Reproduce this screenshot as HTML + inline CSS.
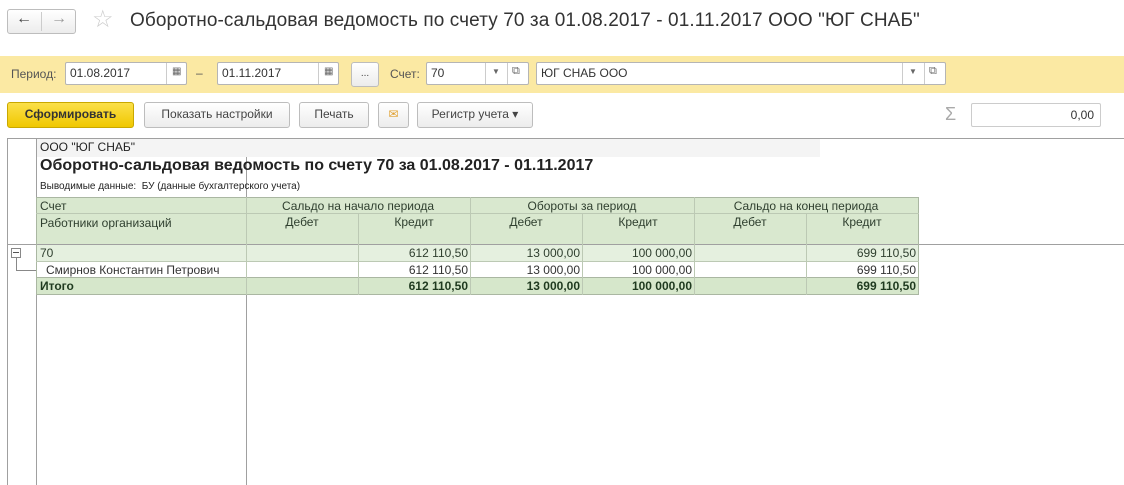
<!DOCTYPE html>
<html><head><meta charset="utf-8"><style>
*{box-sizing:border-box;margin:0;padding:0}
body{width:1124px;height:485px;background:#fff;font-family:"Liberation Sans",Arial,sans-serif;position:relative;overflow:hidden;color:#333}
.a{position:absolute}
.btn{position:absolute;border:1px solid #bdbdbd;border-radius:3px;background:linear-gradient(#fff,#ececec);font-size:12px;color:#444;text-align:center;line-height:22px;height:24px}
.inp{position:absolute;background:#fff;border:1px solid #b5b5b5;border-radius:2px;height:23px;font-size:12px;line-height:21px;padding-left:4px;color:#333}
.c{position:absolute;font-size:12px;line-height:16px;white-space:nowrap;color:#2f3f2f}
.g{position:absolute;border:1px solid #bcc9b4}
</style></head><body>
<!-- nav -->
<div class="btn" style="left:7px;top:9px;width:69px;height:25px"></div>
<div class="a" style="left:41px;top:12px;width:1px;height:19px;background:#ccc"></div>
<div class="a" style="left:16px;top:10px;font-size:16px;color:#444">&#8592;</div>
<div class="a" style="left:51px;top:10px;font-size:16px;color:#999">&#8594;</div>
<div class="a" style="left:92px;top:5px;font-size:24px;color:#ccc">&#9734;</div>
<div class="a" style="left:130px;top:10px;font-size:19px;color:#333;letter-spacing:0.1px">Оборотно-сальдовая ведомость по счету 70 за 01.08.2017 - 01.11.2017 ООО "ЮГ СНАБ"</div>
<!-- yellow bar -->
<div class="a" style="left:0;top:56px;width:1124px;height:37px;background:#fbe9a3"></div>
<div class="a" style="left:11px;top:67px;font-size:12px;color:#555">Период:</div>
<div class="inp" style="left:65px;top:62px;width:122px">01.08.2017</div>
<div class="a" style="left:166px;top:63px;width:1px;height:21px;background:#ccc"></div>
<div class="a" style="left:172px;top:66px;font-size:10px;color:#666">&#9638;</div>
<div class="a" style="left:196px;top:66px;font-size:12px;color:#555">–</div>
<div class="inp" style="left:217px;top:62px;width:122px">01.11.2017</div>
<div class="a" style="left:318px;top:63px;width:1px;height:21px;background:#ccc"></div>
<div class="a" style="left:324px;top:66px;font-size:10px;color:#666">&#9638;</div>
<div class="btn" style="left:351px;top:62px;width:28px;height:25px;line-height:22px;font-size:10px">...</div>
<div class="a" style="left:390px;top:67px;font-size:12px;color:#555">Счет:</div>
<div class="inp" style="left:426px;top:62px;width:103px">70</div>
<div class="a" style="left:485px;top:63px;width:1px;height:21px;background:#ccc"></div>
<div class="a" style="left:507px;top:63px;width:1px;height:21px;background:#ccc"></div>
<div class="a" style="left:492px;top:67px;font-size:8px;color:#666">&#9660;</div>
<div class="a" style="left:512px;top:65px;font-size:11px;color:#666">&#10697;</div>
<div class="inp" style="left:536px;top:62px;width:410px">ЮГ СНАБ ООО</div>
<div class="a" style="left:902px;top:63px;width:1px;height:21px;background:#ccc"></div>
<div class="a" style="left:924px;top:63px;width:1px;height:21px;background:#ccc"></div>
<div class="a" style="left:909px;top:67px;font-size:8px;color:#666">&#9660;</div>
<div class="a" style="left:929px;top:65px;font-size:11px;color:#666">&#10697;</div>
<!-- toolbar -->
<div class="btn" style="left:7px;top:102px;width:127px;height:26px;background:linear-gradient(#fbe04a,#f0c800);border-color:#c9a800;font-weight:bold;color:#333">Сформировать</div>
<div class="btn" style="left:144px;top:102px;width:146px;height:26px">Показать настройки</div>
<div class="btn" style="left:299px;top:102px;width:70px;height:26px">Печать</div>
<div class="btn" style="left:378px;top:102px;width:31px;height:26px;color:#e0a030">&#9993;</div>
<div class="btn" style="left:417px;top:102px;width:116px;height:26px">Регистр учета &#9662;</div>
<div class="a" style="left:945px;top:104px;font-size:18px;color:#aaa">&#931;</div>
<div class="inp" style="left:971px;top:103px;width:130px;height:24px;text-align:right;padding-right:6px;line-height:22px;border-color:#ccc">0,00</div>
<!-- report frame -->
<div class="a" style="left:7px;top:138px;width:1117px;height:1px;background:#a0a0a0"></div>
<div class="a" style="left:7px;top:138px;width:1px;height:347px;background:#a0a0a0"></div>
<div class="a" style="left:36px;top:138px;width:1px;height:347px;background:#a0a0a0"></div>
<div class="a" style="left:246px;top:138px;width:1px;height:347px;background:#a0a0a0"></div>
<div class="a" style="left:7px;top:244px;width:1117px;height:1px;background:#a0a0a0"></div>
<div class="a" style="left:37px;top:139px;width:783px;height:18px;background:#f4f4f4"></div>
<div class="a" style="left:40px;top:140px;font-size:12px;color:#222">ООО "ЮГ СНАБ"</div>
<div class="a" style="left:40px;top:157px;font-size:16px;font-weight:bold;color:#222">Оборотно-сальдовая ведомость по счету 70 за 01.08.2017 - 01.11.2017</div>
<div class="a" style="left:40px;top:181px;font-size:10px;color:#222">Выводимые данные:&nbsp; БУ (данные бухгалтерского учета)</div>
<!-- header -->
<div class="a" style="left:36px;top:197px;width:883px;height:47px;background:#d9e8cf"></div>
<div class="a" style="left:36px;top:245px;width:883px;height:16px;background:#e5f0df"></div>
<div class="a" style="left:36px;top:278px;width:883px;height:16px;background:#d6e7cb"></div>
<div class="g" style="left:36px;top:197px;width:883px;height:98px;border-color:#aab7a2"></div>
<div class="a" style="left:36px;top:213px;width:883px;height:1px;background:#bcc9b4"></div>
<div class="a" style="left:36px;top:261px;width:883px;height:1px;background:#bcc9b4"></div>
<div class="a" style="left:36px;top:277px;width:883px;height:1px;background:#aab7a2"></div>
<div class="a" style="left:246px;top:197px;width:1px;height:98px;background:#bcc9b4"></div>
<div class="a" style="left:470px;top:197px;width:1px;height:98px;background:#bcc9b4"></div>
<div class="a" style="left:694px;top:197px;width:1px;height:98px;background:#bcc9b4"></div>
<div class="a" style="left:358px;top:213px;width:1px;height:82px;background:#bcc9b4"></div>
<div class="a" style="left:582px;top:213px;width:1px;height:82px;background:#bcc9b4"></div>
<div class="a" style="left:806px;top:213px;width:1px;height:82px;background:#bcc9b4"></div>
<div class="c" style="left:40px;top:198px">Счет</div>
<div class="c" style="left:40px;top:215px">Работники организаций</div>
<div class="c" style="left:246px;top:198px;width:224px;text-align:center">Сальдо на начало периода</div>
<div class="c" style="left:470px;top:198px;width:224px;text-align:center">Обороты за период</div>
<div class="c" style="left:694px;top:198px;width:224px;text-align:center">Сальдо на конец периода</div>
<div class="c" style="left:246px;top:214px;width:112px;text-align:center">Дебет</div>
<div class="c" style="left:358px;top:214px;width:112px;text-align:center">Кредит</div>
<div class="c" style="left:470px;top:214px;width:112px;text-align:center">Дебет</div>
<div class="c" style="left:582px;top:214px;width:112px;text-align:center">Кредит</div>
<div class="c" style="left:694px;top:214px;width:112px;text-align:center">Дебет</div>
<div class="c" style="left:806px;top:214px;width:112px;text-align:center">Кредит</div>
<!-- rows -->
<div class="c" style="left:40px;top:245px">70</div>
<div class="c" style="left:358px;top:245px;width:110px;text-align:right">612 110,50</div>
<div class="c" style="left:470px;top:245px;width:110px;text-align:right">13 000,00</div>
<div class="c" style="left:582px;top:245px;width:110px;text-align:right">100 000,00</div>
<div class="c" style="left:806px;top:245px;width:110px;text-align:right">699 110,50</div>
<div class="c" style="left:46px;top:262px;color:#333">Смирнов Константин Петрович</div>
<div class="c" style="left:358px;top:262px;width:110px;text-align:right;color:#333">612 110,50</div>
<div class="c" style="left:470px;top:262px;width:110px;text-align:right;color:#333">13 000,00</div>
<div class="c" style="left:582px;top:262px;width:110px;text-align:right;color:#333">100 000,00</div>
<div class="c" style="left:806px;top:262px;width:110px;text-align:right;color:#333">699 110,50</div>
<div class="c" style="left:40px;top:278px;font-weight:bold;color:#1f3a1f">Итого</div>
<div class="c" style="left:358px;top:278px;width:110px;text-align:right;font-weight:bold;color:#1f3a1f">612 110,50</div>
<div class="c" style="left:470px;top:278px;width:110px;text-align:right;font-weight:bold;color:#1f3a1f">13 000,00</div>
<div class="c" style="left:582px;top:278px;width:110px;text-align:right;font-weight:bold;color:#1f3a1f">100 000,00</div>
<div class="c" style="left:806px;top:278px;width:110px;text-align:right;font-weight:bold;color:#1f3a1f">699 110,50</div>
<!-- tree toggle -->
<div class="a" style="left:11px;top:248px;width:10px;height:10px;border:1px solid #888;background:#fff"></div>
<div class="a" style="left:13px;top:252px;width:6px;height:1px;background:#555"></div>
<div class="a" style="left:16px;top:258px;width:1px;height:12px;background:#888"></div>
<div class="a" style="left:16px;top:270px;width:20px;height:1px;background:#888"></div>
</body></html>
